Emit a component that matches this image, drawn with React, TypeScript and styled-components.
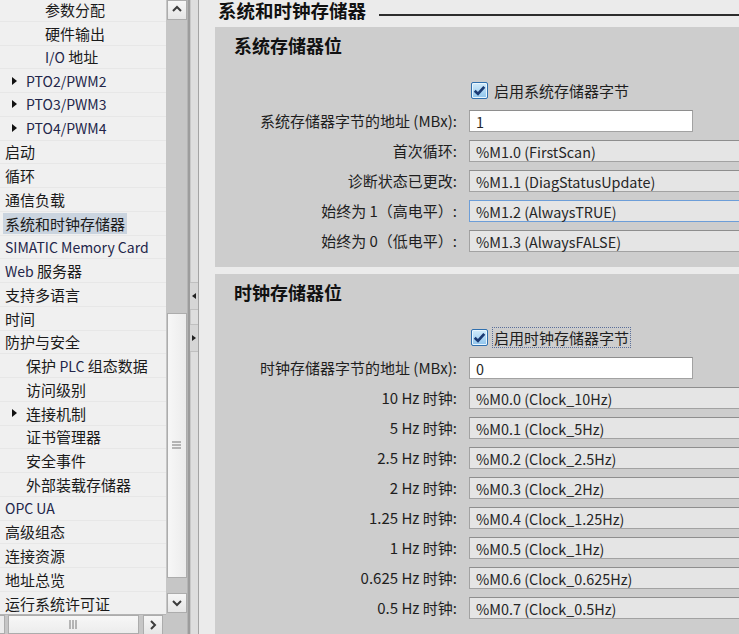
import React from "react"
import styled, { createGlobalStyle } from "styled-components"

const GlobalStyle = createGlobalStyle`
  html, body {
    margin: 0;
    padding: 0;
    background: #ebebeb;
    overflow: hidden;
  }
  * {
    box-sizing: border-box;
  }
`

const FONT = `"Noto Sans CJK SC", "Noto Sans", sans-serif`

const Screen = styled.div`
  display: flex;
  width: 739px;
  height: 634px;
  overflow: hidden;
  font-family: ${FONT};
  color: #1e1e1e;
`

// ---- left navigation tree ----
const LeftPane = styled.div`
  display: grid;
  grid-template-columns: 166px 22px;
  grid-template-rows: 614px 20px;
  flex: none;
  background: #c6c6c6;
`

const TreeList = styled.div`
  background: #f0f0f0;
  overflow: hidden;
`

const TreeInner = styled.div`
  margin-top: -2px;
`

const TreeRow = styled.div<{ $level: number }>`
  display: flex;
  align-items: center;
  height: 23.76px;
  padding-left: ${({ $level }) => ($level === 0 ? 3 : 3 + ($level - 1) * 19)}px;
  border-bottom: 1px solid #e7e7e7;
  font-size: 15px;
  white-space: nowrap;
`

const ArrowSlot = styled.span`
  display: flex;
  align-items: center;
  width: 21px;
  height: 100%;
  padding-left: 9px;
  flex: none;
`

const Triangle = styled.span`
  width: 0;
  height: 0;
  border-left: 5px solid #111;
  border-top: 4.5px solid transparent;
  border-bottom: 4.5px solid transparent;
`

const RowLabel = styled.span<{ $selected?: boolean }>`
  padding: 0 2px;
  line-height: 21px;
  background: ${({ $selected }) => ($selected ? "#cad4df" : "transparent")};
  color: #1a1a1a;
`

const Latin = styled.span`
  font-size: 14px;
  color: #23264a;
`

const VScroll = styled.div`
  display: flex;
  flex-direction: column;
  align-items: center;
  background: #c6c6c6;
  border-right: 1px solid #b4b4b4;
`

const ScrollButton = styled.div`
  display: flex;
  align-items: center;
  justify-content: center;
  width: 20px;
  height: 20px;
  flex: none;
  background: linear-gradient(#f6f6f6, #e6e6e6);
  border: 1px solid #acacac;
  color: #4a4a4a;
`

const VThumb = styled.div<{ $top: number; $size: number }>`
  display: flex;
  align-items: center;
  justify-content: center;
  width: 20px;
  height: ${({ $size }) => $size}px;
  margin-top: ${({ $top }) => $top}px;
  background: linear-gradient(90deg, #f7f7f7, #ececec);
  border: 1px solid #acacac;
  flex: none;
`

const Spacer = styled.div`
  flex: 1;
`

const BottomGap = styled.div`
  flex: none;
  height: 1px;
`

const HScroll = styled.div`
  display: flex;
  align-items: stretch;
  background: #c6c6c6;
  border-top: 1px solid #b4b4b4;
  padding-right: 3px;
`

const HStub = styled.div`
  width: 5px;
  background: #ececec;
  border: 1px solid #acacac;
  border-left: none;
`

const HThumb = styled.div`
  display: flex;
  align-items: center;
  justify-content: center;
  width: 131px;
  margin-left: 3px;
  background: linear-gradient(#f7f7f7, #ececec);
  border: 1px solid #acacac;
`

const Corner = styled.div`
  background: #c6c6c6;
  border-right: 1px solid #b4b4b4;
`

// ---- splitter ----
const Splitter = styled.div`
  display: flex;
  flex-direction: column;
  justify-content: center;
  gap: 14px;
  width: 11px;
  flex: none;
  background: #dedede;
  border-left: 2px solid #9c9c9c;
  border-right: 1px solid #a4a4a4;
  box-shadow: inset 1px 0 0 #c8c8c8;
`

const SplitButton = styled.div`
  display: flex;
  align-items: center;
  justify-content: center;
  height: 28px;
  border-top: 1px solid #c0c0c0;
  border-bottom: 1px solid #c0c0c0;
  background: #d6d6d6;
`

const SmallTri = styled.span<{ $dir: "left" | "right" }>`
  width: 0;
  height: 0;
  border-top: 3.5px solid transparent;
  border-bottom: 3.5px solid transparent;
  ${({ $dir }) =>
    $dir === "left" ? "border-right: 4px solid #222;" : "border-left: 4px solid #222;"}
`

// ---- right editor ----
const Editor = styled.div`
  display: flex;
  flex-direction: column;
  flex: 1;
  min-width: 0;
  padding-left: 16px;
  background: #ebebeb;
`

const TitleRow = styled.div`
  display: flex;
  align-items: flex-start;
  gap: 13px;
  height: 27px;
  padding-left: 3px;
  flex: none;
`

const Title = styled.div`
  font-size: 18.5px;
  font-weight: 700;
  line-height: 20px;
  color: #111;
  white-space: nowrap;
`

const TitleRule = styled.div`
  flex: 1;
  height: 2px;
  margin-top: 14px;
  background: #2c2c2c;
`

const Section = styled.section<{ $padTop: number }>`
  display: flex;
  flex-direction: column;
  background: #cdcdcd;
  padding: ${({ $padTop }) => $padTop}px 0 15px 19px;
  width: 540px;
  flex: none;
`

const SectionGap = styled.div`
  height: 7px;
  flex: none;
`

const SectionTitle = styled.div`
  font-size: 18px;
  font-weight: 700;
  line-height: 20px;
  color: #111;
  margin-bottom: 24px;
`

const Form = styled.div`
  display: grid;
  grid-template-columns: 223px 1fr;
  column-gap: 12px;
  row-gap: 8px;
  align-items: center;
`

const FieldLabel = styled.div`
  font-size: 15px;
  line-height: 22px;
  text-align: right;
  white-space: nowrap;
  color: #1e1e1e;
`

const CheckRow = styled.div`
  display: flex;
  align-items: center;
  gap: 5px;
  height: 22px;
  padding-left: 2px;
  margin-bottom: 1px;
`

const CheckBox = styled.span`
  display: flex;
  align-items: center;
  justify-content: center;
  width: 17px;
  height: 17px;
  border: 1px solid #2f6fae;
  border-radius: 2px;
  background: linear-gradient(#d3ecfb, #8fc4ec);
  box-shadow: inset 0 0 0 1px #e9f6fe;
  flex: none;
`

const CheckText = styled.span<{ $focus?: boolean }>`
  font-size: 15px;
  line-height: 17px;
  padding: 1px 1px;
  white-space: nowrap;
  outline: ${({ $focus }) => ($focus ? "1px dotted #5a6f9a" : "none")};
`

const Field = styled.div<{ $editable?: boolean; $focused?: boolean }>`
  display: flex;
  align-items: center;
  height: 22px;
  width: ${({ $editable }) => ($editable ? "224px" : "300px")};
  padding-left: 6px;
  font-size: 14.4px;
  white-space: nowrap;
  color: #262626;
  background: ${({ $editable }) => ($editable ? "#ffffff" : "#e5e5e5")};
  border: 1px solid ${({ $focused }) => ($focused ? "#6d9ed8" : "#a2a2a2")};
  border-top-color: ${({ $focused }) => ($focused ? "#6d9ed8" : "#8e8e8e")};
`

type NavItem = { text: string; level: number; arrow?: boolean; selected?: boolean }

const navItems: NavItem[] = [
  { text: "参数分配", level: 2 },
  { text: "硬件输出", level: 2 },
  { text: "I/O 地址", level: 2 },
  { text: "PTO2/PWM2", level: 1, arrow: true },
  { text: "PTO3/PWM3", level: 1, arrow: true },
  { text: "PTO4/PWM4", level: 1, arrow: true },
  { text: "启动", level: 0 },
  { text: "循环", level: 0 },
  { text: "通信负载", level: 0 },
  { text: "系统和时钟存储器", level: 0, selected: true },
  { text: "SIMATIC Memory Card", level: 0 },
  { text: "Web 服务器", level: 0 },
  { text: "支持多语言", level: 0 },
  { text: "时间", level: 0 },
  { text: "防护与安全", level: 0 },
  { text: "保护 PLC 组态数据", level: 1 },
  { text: "访问级别", level: 1 },
  { text: "连接机制", level: 1, arrow: true },
  { text: "证书管理器", level: 1 },
  { text: "安全事件", level: 1 },
  { text: "外部装载存储器", level: 1 },
  { text: "OPC UA", level: 0 },
  { text: "高级组态", level: 0 },
  { text: "连接资源", level: 0 },
  { text: "地址总览", level: 0 },
  { text: "运行系统许可证", level: 0 },
]

const systemBits = [
  { label: "首次循环:", value: "%M1.0 (FirstScan)" },
  { label: "诊断状态已更改:", value: "%M1.1 (DiagStatusUpdate)" },
  { label: "始终为 1（高电平）:", value: "%M1.2 (AlwaysTRUE)", focused: true },
  { label: "始终为 0（低电平）:", value: "%M1.3 (AlwaysFALSE)" },
]

const clockBits = [
  { label: "10 Hz 时钟:", value: "%M0.0 (Clock_10Hz)" },
  { label: "5 Hz 时钟:", value: "%M0.1 (Clock_5Hz)" },
  { label: "2.5 Hz 时钟:", value: "%M0.2 (Clock_2.5Hz)" },
  { label: "2 Hz 时钟:", value: "%M0.3 (Clock_2Hz)" },
  { label: "1.25 Hz 时钟:", value: "%M0.4 (Clock_1.25Hz)" },
  { label: "1 Hz 时钟:", value: "%M0.5 (Clock_1Hz)" },
  { label: "0.625 Hz 时钟:", value: "%M0.6 (Clock_0.625Hz)" },
  { label: "0.5 Hz 时钟:", value: "%M0.7 (Clock_0.5Hz)" },
]

// wrap Latin runs so they get the narrower size used in the tree
const renderMixed = (text: string) =>
  text.split(/([A-Za-z0-9/.]+(?: [A-Za-z0-9/.]+)*)/).map((part, i) =>
    /[A-Za-z0-9]/.test(part) ? <Latin key={i}>{part}</Latin> : part
  )

const Chevron = ({ dir }: { dir: "up" | "down" | "right" }) => {
  const d = dir === "up" ? "M2 7 L6 3 L10 7" : dir === "down" ? "M2 4 L6 8 L10 4" : "M4 2 L8 6 L4 10"
  return (
    <svg width="12" height="12" viewBox="0 0 12 12">
      <path d={d} fill="none" stroke="#3c3c3c" strokeWidth="2" />
    </svg>
  )
}

const Grip = ({ vertical }: { vertical?: boolean }) => (
  <svg width="9" height="9" viewBox="0 0 9 9">
    {[1, 4, 7].map((p) =>
      vertical ? (
        <line key={p} x1="0" y1={p} x2="9" y2={p} stroke="#777" strokeWidth="1" />
      ) : (
        <line key={p} x1={p} y1="0" x2={p} y2="9" stroke="#777" strokeWidth="1" />
      )
    )}
  </svg>
)

const Check = () => (
  <svg width="13" height="13" viewBox="0 0 12 12">
    <path d="M1.6 6.2 L4.6 9.1 L10.4 2.6" fill="none" stroke="#1b3a73" strokeWidth="2.5" />
  </svg>
)

export default function App() {
  return (
    <>
      <GlobalStyle />
      <Screen>
        <LeftPane>
          <TreeList>
            <TreeInner>
              {navItems.map((item) => (
                <TreeRow key={item.text} $level={item.level}>
                  {item.level > 0 && <ArrowSlot>{item.arrow && <Triangle />}</ArrowSlot>}
                  <RowLabel $selected={item.selected}>{renderMixed(item.text)}</RowLabel>
                </TreeRow>
              ))}
            </TreeInner>
          </TreeList>
          <VScroll>
            <ScrollButton>
              <Chevron dir="up" />
            </ScrollButton>
            <VThumb $top={293} $size={265}>
              <Grip vertical />
            </VThumb>
            <Spacer />
            <ScrollButton>
              <Chevron dir="down" />
            </ScrollButton>
            <BottomGap />
          </VScroll>
          <HScroll>
            <HStub />
            <HThumb>
              <Grip />
            </HThumb>
            <Spacer />
            <ScrollButton>
              <Chevron dir="right" />
            </ScrollButton>
          </HScroll>
          <Corner />
        </LeftPane>

        <Splitter>
          <SplitButton>
            <SmallTri $dir="left" />
          </SplitButton>
          <SplitButton>
            <SmallTri $dir="right" />
          </SplitButton>
        </Splitter>

        <Editor>
          <TitleRow>
            <Title>系统和时钟存储器</Title>
            <TitleRule />
          </TitleRow>

          <Section $padTop={8}>
            <SectionTitle>系统存储器位</SectionTitle>
            <Form>
              <div />
              <CheckRow>
                <CheckBox>
                  <Check />
                </CheckBox>
                <CheckText>启用系统存储器字节</CheckText>
              </CheckRow>
              <FieldLabel>系统存储器字节的地址 (MBx):</FieldLabel>
              <Field $editable>1</Field>
              {systemBits.map((b) => (
                <React.Fragment key={b.label}>
                  <FieldLabel>{b.label}</FieldLabel>
                  <Field $focused={b.focused}>{b.value}</Field>
                </React.Fragment>
              ))}
            </Form>
          </Section>

          <SectionGap />

          <Section $padTop={8}>
            <SectionTitle>时钟存储器位</SectionTitle>
            <Form>
              <div />
              <CheckRow>
                <CheckBox>
                  <Check />
                </CheckBox>
                <CheckText $focus>启用时钟存储器字节</CheckText>
              </CheckRow>
              <FieldLabel>时钟存储器字节的地址 (MBx):</FieldLabel>
              <Field $editable>0</Field>
              {clockBits.map((b) => (
                <React.Fragment key={b.label}>
                  <FieldLabel>{b.label}</FieldLabel>
                  <Field>{b.value}</Field>
                </React.Fragment>
              ))}
            </Form>
          </Section>
        </Editor>
      </Screen>
    </>
  )
}
